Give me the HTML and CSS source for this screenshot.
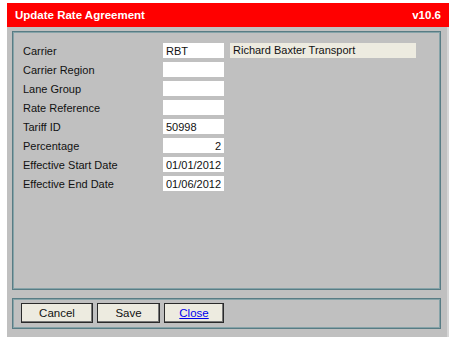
FILE: index.html
```html
<!DOCTYPE html>
<html lang="en">
<head>
    <meta charset="UTF-8">
    <title>Update Rate Agreement</title>
    <link rel="stylesheet" href="styles.css">
</head>
<body>
    <div class="window">
        <div class="titlebar">
            <span>Update Rate Agreement</span>
            <span>v10.6</span>
        </div>
        <div class="body">
            <div class="panel fields">
                <div class="row">
                    <label>Carrier</label>
                    <input type="text" value="RBT">
                    <span class="display">Richard Baxter Transport</span>
                </div>
                <div class="row">
                    <label>Carrier Region</label>
                    <input type="text" value="">
                </div>
                <div class="row">
                    <label>Lane Group</label>
                    <input type="text" value="">
                </div>
                <div class="row">
                    <label>Rate Reference</label>
                    <input type="text" value="">
                </div>
                <div class="row">
                    <label>Tariff ID</label>
                    <input type="text" value="50998">
                </div>
                <div class="row">
                    <label>Percentage</label>
                    <input type="text" class="num" value="2">
                </div>
                <div class="row">
                    <label>Effective Start Date</label>
                    <input type="text" value="01/01/2012">
                </div>
                <div class="row">
                    <label>Effective End Date</label>
                    <input type="text" value="01/06/2012">
                </div>
            </div>
            <div class="panel actions">
                <button class="btn cancel">Cancel</button>
                <button class="btn save">Save</button>
                <button class="btn close"><a href="#">Close</a></button>
            </div>
        </div>
    </div>
</body>
</html>
```

FILE: styles.css
```css
body {
    margin: 0;
    background: white;
    font-family: "Liberation Sans", Arial, sans-serif;
    font-size: 11px;
    color: #111;
}
.window {
    margin: 3px 0 0 7px;
    width: 442px;
}
.titlebar {
    height: 24px;
    background: #ff0000;
    color: white;
    font-weight: bold;
    font-size: 11.5px;
    display: flex;
    align-items: center;
    justify-content: space-between;
    padding: 0 8px;
    box-sizing: border-box;
}
.body {
    background: #c0c0c0;
    padding: 4px 6px 8px 5px;
    border-right: 2px solid #d6d6d6;
}
.panel {
    border: 1px solid #587c84;
    box-shadow: inset 0 0 0 1px #86a3a8;
    padding: 1px;
}
.fields {
    height: 255px;
    padding: 11px 0 0 10px;
    box-sizing: content-box;
    height: 246px;
}
.row {
    display: flex;
    align-items: center;
    height: 15px;
    margin-bottom: 4px;
}
.row label {
    width: 140px;
}
.row input {
    width: 61px;
    height: 15px;
    box-sizing: border-box;
    border: none;
    background: white;
    padding: 0 3px;
    font: inherit;
    color: #111;
    outline: none;
}
.row input.num { text-align: right; }
.display {
    margin-left: 6px;
    width: 186px;
    height: 15px;
    line-height: 15px;
    background: #edebe0;
    padding: 0 3px;
    box-sizing: border-box;
}
.actions {
    margin-top: 8px;
    display: flex;
    gap: 4px;
    padding: 4px 0 5px 8px;
}
.btn {
    height: 20px;
    background: #edebe0;
    border: 1px solid #2a2a2a;
    box-shadow: inset -1px -1px 0 #777;
    font: inherit;
    font-size: 11.5px;
    color: #111;
    padding: 0;
}
.cancel { width: 72px; }
.save { width: 63px; }
.close { width: 60px; }
.close a { color: #0000ee; }
```
